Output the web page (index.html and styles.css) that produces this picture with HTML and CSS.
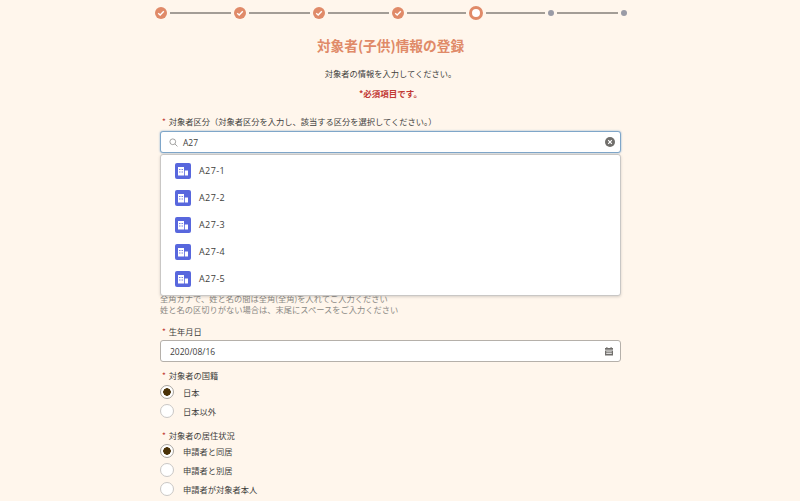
FILE: index.html
```html
<!DOCTYPE html>
<html lang="ja">
<head>
    <meta charset="UTF-8">
    <meta name="viewport" content="width=device-width, initial-scale=1.0">
    <title>対象者(子供)情報の登録</title>
    <link rel="stylesheet" href="styles.css">
</head>
<body>
    <div class="page">
        <!-- Progress steps -->
        <div class="steps">
            <span class="step done"><svg viewBox="0 0 12 12"><path d="M3.2 6.2 5.2 8 8.8 4.2"/></svg></span>
            <span class="line long"></span>
            <span class="step done"><svg viewBox="0 0 12 12"><path d="M3.2 6.2 5.2 8 8.8 4.2"/></svg></span>
            <span class="line long"></span>
            <span class="step done"><svg viewBox="0 0 12 12"><path d="M3.2 6.2 5.2 8 8.8 4.2"/></svg></span>
            <span class="line long"></span>
            <span class="step done"><svg viewBox="0 0 12 12"><path d="M3.2 6.2 5.2 8 8.8 4.2"/></svg></span>
            <span class="line"></span>
            <span class="step current"></span>
            <span class="line"></span>
            <span class="step todo"></span>
            <span class="line long"></span>
            <span class="step todo"></span>
        </div>

        <h1 class="title">対象者(子供)情報の登録</h1>
        <p class="lead">対象者の情報を入力してください。</p>
        <p class="required-note">*必須項目です。</p>

        <main class="form">
            <!-- Search field with open dropdown -->
            <div class="field">
                <label class="label"><span class="star">*</span>対象者区分（対象者区分を入力し、該当する区分を選択してください。）</label>
                <div class="combo">
                    <div class="input focused">
                        <svg class="search-icon" viewBox="0 0 10 10"><circle cx="4.2" cy="4.2" r="3.2"/><path d="M6.6 6.6 9.4 9.4"/></svg>
                        <span>A27</span>
                        <svg class="clear-icon" viewBox="0 0 10 10"><circle cx="5" cy="5" r="5"/><path d="M3.2 3.2 6.8 6.8M6.8 3.2 3.2 6.8"/></svg>
                    </div>
                    <ul class="dropdown">
                        <li><svg class="org-icon" viewBox="0 0 16 16"><rect width="16" height="16" rx="2"/><path class="w" d="M3 4h6v8.500H3z"/><path class="w" d="M9.800 7.500H13v5H9.800z"/><path class="b" d="M4.200 6h1.200v1H4.200zM6.600 6h1.200v1H6.600zM4.200 8.500h1.200v1H4.200zM6.600 8.500h1.200v1H6.600z"/></svg>A27-1</li>
                        <li><svg class="org-icon" viewBox="0 0 16 16"><rect width="16" height="16" rx="2"/><path class="w" d="M3 4h6v8.500H3z"/><path class="w" d="M9.800 7.500H13v5H9.800z"/><path class="b" d="M4.200 6h1.200v1H4.200zM6.600 6h1.200v1H6.600zM4.200 8.500h1.200v1H4.200zM6.600 8.500h1.200v1H6.600z"/></svg>A27-2</li>
                        <li><svg class="org-icon" viewBox="0 0 16 16"><rect width="16" height="16" rx="2"/><path class="w" d="M3 4h6v8.500H3z"/><path class="w" d="M9.800 7.500H13v5H9.800z"/><path class="b" d="M4.200 6h1.200v1H4.200zM6.600 6h1.200v1H6.600zM4.200 8.500h1.200v1H4.200zM6.600 8.500h1.200v1H6.600z"/></svg>A27-3</li>
                        <li><svg class="org-icon" viewBox="0 0 16 16"><rect width="16" height="16" rx="2"/><path class="w" d="M3 4h6v8.500H3z"/><path class="w" d="M9.800 7.500H13v5H9.800z"/><path class="b" d="M4.200 6h1.200v1H4.200zM6.600 6h1.200v1H6.600zM4.200 8.500h1.200v1H4.200zM6.600 8.500h1.200v1H6.600z"/></svg>A27-4</li>
                        <li><svg class="org-icon" viewBox="0 0 16 16"><rect width="16" height="16" rx="2"/><path class="w" d="M3 4h6v8.500H3z"/><path class="w" d="M9.800 7.500H13v5H9.800z"/><path class="b" d="M4.200 6h1.200v1H4.200zM6.600 6h1.200v1H6.600zM4.200 8.500h1.200v1H4.200zM6.600 8.500h1.200v1H6.600z"/></svg>A27-5</li>
                    </ul>
                </div>
            </div>

            <!-- Help text of the field hidden behind the dropdown -->
            <div class="help">
                <p>全角カナで、姓と名の間は全角(全角)を入れてご入力ください</p>
                <p>姓と名の区切りがない場合は、末尾にスペースをご入力ください</p>
            </div>

            <div class="field birth">
                <label class="label"><span class="star">*</span>生年月日</label>
                <div class="input">
                    <span>2020/08/16</span>
                    <svg class="date-icon" viewBox="0 0 10 10"><path d="M1 2h8v1.700H1zM2.400 1h1v1h-1zM6.600 1h1v1h-1zM1 4.400h8V9.500H1z"/><path class="cut" d="M2.200 5.600h5.600v.7H2.200zM2.200 7.300h5.600v.7H2.200z"/></svg>
                </div>
            </div>

            <div class="field nation">
                <label class="label"><span class="star">*</span>対象者の国籍</label>
                <div class="radio-row first checked"><span class="radio"></span>日本</div>
                <div class="radio-row"><span class="radio"></span>日本以外</div>
            </div>

            <div class="field living">
                <label class="label"><span class="star">*</span>対象者の居住状況</label>
                <div class="radio-row first checked"><span class="radio"></span>申請者と同居</div>
                <div class="radio-row"><span class="radio"></span>申請者と別居</div>
                <div class="radio-row"><span class="radio"></span>申請者が対象者本人</div>
            </div>
        </main>
    </div>
</body>
</html>
```

FILE: styles.css
```css
/* Page */
* {
    box-sizing: border-box;
    margin: 0;
    padding: 0;
}

html, body {
    height: 501px;
    overflow: hidden;
}

body {
    font-family: "Noto Sans CJK JP", "Noto Sans", sans-serif;
    font-size: 8.25px;
    color: #3e3e3c;
    background-color: #fff6ec;
}

.page {
    width: 781px;
}

/* Progress steps */
.steps {
    display: flex;
    align-items: center;
    gap: 3px;
    width: 472px;
    height: 14px;
    margin: 6px 0 0 155px;
}

.step {
    flex: none;
    border-radius: 50%;
}

.step.done {
    width: 12px;
    height: 12px;
    background: #e08a68;
}

.step.done svg {
    display: block;
    width: 12px;
    height: 12px;
    fill: none;
    stroke: #fff;
    stroke-width: 1.4;
}

.step.current {
    width: 14px;
    height: 14px;
    border: 3px solid #e08a68;
    background: #fff;
}

.step.todo {
    width: 6px;
    height: 6px;
    background: #9a9ba6;
}

.line {
    flex: 1;
    height: 2px;
    background: #a39d96;
}

.line.long {
    flex: 1.04;
}

/* Heading */
.title {
    margin-top: 15px;
    font-size: 13.7px;
    line-height: 20px;
    font-weight: 700;
    text-align: center;
    color: #e08a68;
}

.lead {
    margin-top: 12px;
    line-height: 12px;
    text-align: center;
}

.required-note {
    margin-top: 8px;
    font-size: 8.5px;
    line-height: 12px;
    font-weight: 700;
    text-align: center;
    color: #c23934;
}

/* Form */
.form {
    width: 461px;
    margin: 16px 0 0 160px;
}

.label {
    display: block;
    line-height: 12px;
    margin-bottom: 3px;
}

.star {
    color: #c23934;
    margin: 0 3px 0 2px;
}

.input {
    display: flex;
    align-items: center;
    height: 22px;
    padding: 0 6px 0 9px;
    font-family: "Open Sans", sans-serif;
    font-size: 8.5px;
    background: #fff;
    border: 1px solid #b5b0aa;
    border-radius: 3px;
}

.input span {
    flex: 1;
}

.input.focused {
    padding-left: 8px;
    border-color: #7fa6c9;
    box-shadow: 0 0 2px #7fa6c9;
}

.search-icon {
    width: 9px;
    height: 9px;
    margin-right: 5px;
    fill: none;
    stroke: #9a9a98;
    stroke-width: 1;
}

.clear-icon {
    width: 10px;
    height: 10px;
    margin-right: -1px;
}

.clear-icon circle {
    fill: #706e6b;
}

.clear-icon path {
    fill: none;
    stroke: #fff;
    stroke-width: 1.2;
}

.date-icon {
    width: 10px;
    height: 10px;
    fill: #706e6b;
}

.date-icon .cut {
    fill: #fff;
}

/* Dropdown lies over the next field */
.combo {
    position: relative;
    margin-top: 4px;
}

.dropdown {
    position: absolute;
    top: 23px;
    left: 0;
    right: 0;
    height: 142px;
    padding: 2px 0 0;
    list-style: none;
    background: #fff;
    border: 1px solid #c9c7c5;
    border-radius: 3px;
    box-shadow: 0 1px 3px rgba(0, 0, 0, 0.16);
}

.dropdown li {
    display: flex;
    align-items: center;
    height: 27px;
    padding-left: 14px;
    font-family: "Open Sans", sans-serif;
    font-size: 9px;
    letter-spacing: 0.4px;
}

.org-icon {
    width: 16px;
    height: 16px;
    margin-right: 8px;
    fill: #5867dd;
}

.org-icon .w {
    fill: #fff;
}

.org-icon .b {
    fill: #5867dd;
}

.help {
    margin-top: 140px;
    line-height: 11px;
    color: #8b8985;
}

.birth {
    margin-top: 10px;
}

.nation {
    margin-top: 7px;
}

.living {
    margin-top: 9px;
}

/* Radio buttons */
.radio-row {
    display: flex;
    align-items: center;
    height: 19px;
}

.nation .first {
    margin-top: -2px;
}

.living .first {
    margin-top: -3px;
}

.radio {
    flex: none;
    width: 14px;
    height: 14px;
    margin-right: 9px;
    background: #fff;
    border: 1px solid #c9c7c5;
    border-radius: 50%;
}

.checked .radio {
    border-color: #a8a5a0;
    background: radial-gradient(circle, #4a3208 0 3.5px, #fff 4px);
}
```
